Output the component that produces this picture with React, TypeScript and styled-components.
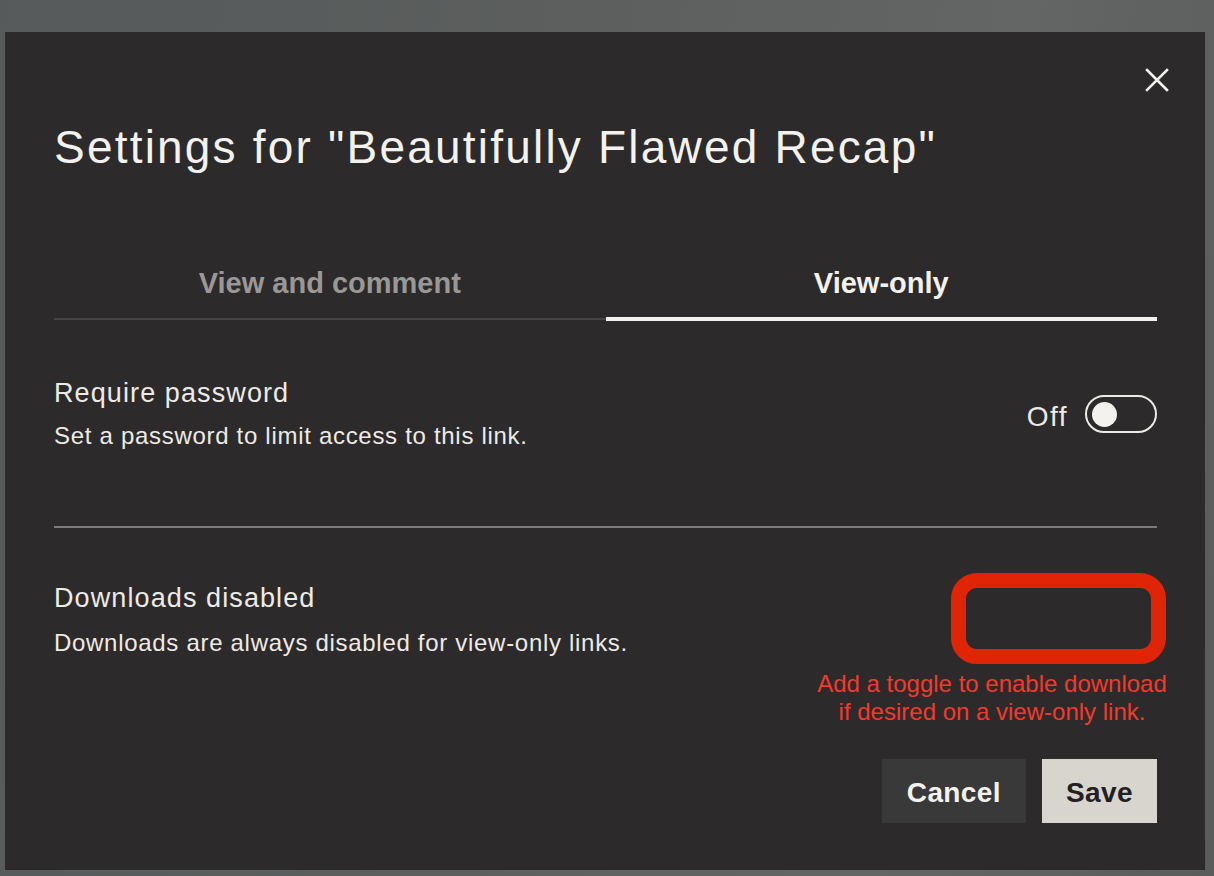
import styled, { createGlobalStyle } from "styled-components";

const GlobalStyle = createGlobalStyle`
  html, body {
    margin: 0;
    padding: 0;
  }
  body {
    background: linear-gradient(100deg, #575a5a 0%, #5d5f5f 45%, #646665 75%, #5a5c5c 100%);
    font-family: "Liberation Sans", Arial, sans-serif;
    min-height: 876px;
  }
`;

const Page = styled.div`
  width: 1214px;
  height: 876px;
  padding: 32px 0 0 5px;
  box-sizing: border-box;
`;

const Modal = styled.div`
  position: relative;
  width: 1200px;
  height: 838px;
  box-sizing: border-box;
  padding: 36px 48px 47px 49px;
  background: #2c2a2b;
  display: flex;
  flex-direction: column;
  color: #eeebe6;
`;

const CloseRow = styled.div`
  display: flex;
  justify-content: flex-end;
  height: 24px;
  margin-right: -12px;
`;

const CloseButton = styled.button`
  width: 24px;
  height: 24px;
  padding: 0;
  border: none;
  background: transparent;
  cursor: pointer;
  display: flex;
`;

const Title = styled.h1`
  margin: 28px 0 0;
  font-size: 46px;
  line-height: 55px;
  font-weight: 400;
  letter-spacing: 2.2px;
  color: #f4f2ee;
`;

const Tabs = styled.div`
  display: flex;
  margin-top: 91px;
`;

const Tab = styled.div<{ $active?: boolean }>`
  flex: 1;
  text-align: center;
  font-size: 29px;
  line-height: 34px;
  font-weight: 700;
  color: ${(p) => (p.$active ? "#f4f2ee" : "#9a9896")};
  padding-bottom: ${(p) => (p.$active ? "17px" : "18px")};
  margin-bottom: ${(p) => (p.$active ? "0" : "1px")};
  border-bottom: ${(p) => (p.$active ? "4px solid #f4f2ee" : "2px solid #454345")};
`;

const SettingRow = styled.div<{ $top: number }>`
  display: flex;
  align-items: center;
  justify-content: space-between;
  margin-top: ${(p) => p.$top}px;
`;

const SettingText = styled.div<{ $gap: number }>`
  display: flex;
  flex-direction: column;
  gap: ${(p) => p.$gap}px;
`;

const SettingTitle = styled.div`
  font-size: 27px;
  line-height: 32px;
  letter-spacing: 1.1px;
  color: #eeebe6;
`;

const SettingDesc = styled.div`
  font-size: 24px;
  line-height: 30px;
  letter-spacing: 0.7px;
  color: #eeebe6;
`;

const ToggleWrap = styled.label`
  display: flex;
  align-items: center;
  gap: 17px;
  font-size: 28px;
  letter-spacing: 1.5px;
  color: #eeebe6;
`;

const ToggleLabel = styled.span`
  padding-top: 5px;
`;

const Track = styled.span`
  position: relative;
  width: 72px;
  height: 38px;
  box-sizing: border-box;
  border: 2px solid #eeebe6;
  border-radius: 19px;
`;

const Knob = styled.span`
  position: absolute;
  left: 5px;
  top: 4.5px;
  width: 25px;
  height: 25px;
  border-radius: 50%;
  background: #f4f2ee;
`;

const Divider = styled.hr`
  margin: 75px 0 0;
  border: none;
  height: 2px;
  background: #7c7a7a;
`;

const Footer = styled.div`
  margin-top: auto;
  display: flex;
  justify-content: flex-end;
  gap: 16px;
`;

const Button = styled.button<{ $primary?: boolean }>`
  height: 64px;
  padding: 3px ${(p) => (p.$primary ? "24px" : "25px")} 0;
  border: none;
  font-family: "Liberation Sans", Arial, sans-serif;
  font-size: 28px;
  font-weight: 700;
  letter-spacing: 0.4px;
  background: ${(p) => (p.$primary ? "#d8d4ce" : "#3a3939")};
  color: ${(p) => (p.$primary ? "#222021" : "#f4f2ee")};
  cursor: pointer;
`;

const Annotation = styled.div`
  position: absolute;
  left: 808px;
  top: 541px;
  width: 358px;
  display: flex;
  flex-direction: column;
`;

const Highlight = styled.div`
  margin-left: 138px;
  width: 215px;
  height: 91px;
  box-sizing: border-box;
  border: 15px solid #e02506;
  border-radius: 26px;
`;

const Note = styled.div`
  margin-top: 6px;
  text-align: center;
  font-size: 24px;
  line-height: 28px;
  color: #f23a2c;
`;

export default function App() {
  return (
    <Page>
      <GlobalStyle />
      <Modal>
        <CloseRow>
          <CloseButton aria-label="Close">
            <svg width="24" height="24" viewBox="0 0 24 24">
              <path
                d="M2 2 L22 22 M22 2 L2 22"
                stroke="#f4f2ee"
                strokeWidth="2.6"
                strokeLinecap="square"
              />
            </svg>
          </CloseButton>
        </CloseRow>
        <Title>Settings for "Beautifully Flawed Recap"</Title>
        <Tabs>
          <Tab>View and comment</Tab>
          <Tab $active>View-only</Tab>
        </Tabs>
        <SettingRow $top={56}>
          <SettingText $gap={12}>
            <SettingTitle>Require password</SettingTitle>
            <SettingDesc>Set a password to limit access to this link.</SettingDesc>
          </SettingText>
          <ToggleWrap>
            <ToggleLabel>Off</ToggleLabel>
            <Track>
              <Knob />
            </Track>
          </ToggleWrap>
        </SettingRow>
        <Divider />
        <SettingRow $top={54}>
          <SettingText $gap={14}>
            <SettingTitle>Downloads disabled</SettingTitle>
            <SettingDesc>Downloads are always disabled for view-only links.</SettingDesc>
          </SettingText>
        </SettingRow>
        <Footer>
          <Button>Cancel</Button>
          <Button $primary>Save</Button>
        </Footer>
        <Annotation>
          <Highlight />
          <Note>
            Add a toggle to enable download
            <br />
            if desired on a view-only link.
          </Note>
        </Annotation>
      </Modal>
    </Page>
  );
}
